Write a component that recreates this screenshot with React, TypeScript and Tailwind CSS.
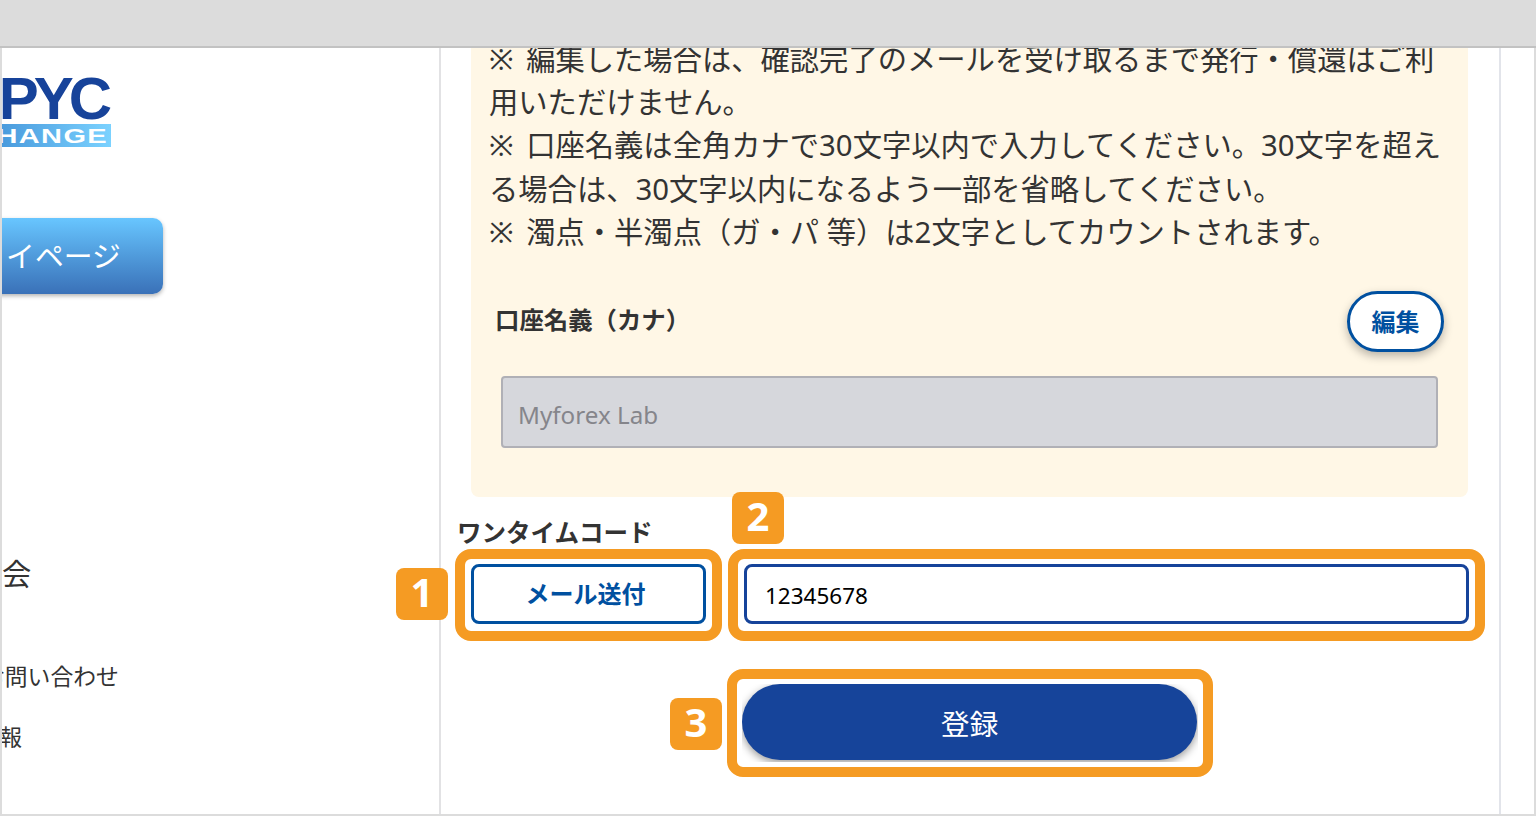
import React from 'react';

const NOTICE_LINES = [
  { mark: true, text: '編集した場合は、確認完了のメールを受け取るまで発行・償還はご利' },
  { mark: false, text: '用いただけません。' },
  { mark: true, text: '口座名義は全角カナで30文字以内で入力してください。30文字を超え' },
  { mark: false, text: 'る場合は、30文字以内になるよう一部を省略してください。' },
  { mark: true, text: '濁点・半濁点（ガ・パ 等）は2文字としてカウントされます。' },
];

const Badge: React.FC<{ n: number; className: string }> = ({ n, className }) => (
  <div className={`absolute flex h-[52px] w-[52px] items-center justify-center rounded-lg bg-[#f59b23] pb-1 text-[40px] leading-none font-bold text-white ${className}`}>
    {n}
  </div>
);

const Sidebar: React.FC = () => (
  <aside className="w-[439px] shrink-0 overflow-hidden border-r-2 border-[#e2e2e4]">
    <div className="mt-[26px] h-[73px] w-[109px] overflow-hidden">
      <div className="flex h-[50px] justify-end text-[60px] leading-[50px] font-bold tracking-[-5px] text-[#17439a] [font-family:'Liberation_Sans',sans-serif]">
        <span className="pr-[4px]">PYC</span>
      </div>
      <div className="flex h-[23px] items-center justify-end overflow-hidden bg-gradient-to-r from-[#4a9bdd] to-[#7bd2ff] pr-[3px] text-[21px] leading-none font-bold text-white [font-family:'Liberation_Sans',sans-serif]">
        <span className="origin-right scale-x-[1.38] whitespace-nowrap tracking-[1px]">EXCHANGE</span>
      </div>
    </div>
    <div className="mt-[71px] -ml-[70px] flex h-[76px] w-[231px] items-center justify-center rounded-[10px] bg-gradient-to-b from-[#68c6ff] to-[#3a71b8] text-[28.8px] text-white shadow-[0_2px_4px_rgba(0,0,0,0.3)]">
      <span className="mr-[3px]">マ</span>イページ
    </div>
    <div className="mt-[258px] h-[44px] text-[29.3px] leading-[44px] text-[#333]">会</div>
    <div className="mt-[64px] -ml-[20px] h-[34px] text-[22.8px] leading-[34px] whitespace-nowrap text-[#333]">お問い合わせ</div>
    <div className="mt-[25px] -ml-[24px] h-[34px] text-[22px] leading-[34px] whitespace-nowrap text-[#333]">情報</div>
  </aside>
);

const App: React.FC = () => {
  return (
    <div className="flex h-screen w-full flex-col overflow-hidden bg-white [font-family:'Noto_Sans','Noto_Sans_CJK_JP',sans-serif]">
      <div className="relative z-10 h-[48px] shrink-0 border-b-2 border-[#c2c2c2] bg-[#dcdcdc]" />
      <div className="flex min-h-0 flex-1 border-x-2 border-b-2 border-[#dcdcdc]">
        <Sidebar />
        <main className="w-[1060px] shrink-0 border-r-2 border-[#e2e4ea]">
          <section className="-mt-[10px] ml-[30px] w-[997px] rounded-b-lg bg-[#fff7e6] pb-[49px]">
            <div className="pl-[18px] text-[29.3px] leading-[43.2px] whitespace-nowrap text-[#333]">
              {NOTICE_LINES.map((line) => (
                <div key={line.text}>
                  {line.mark && <span className="[word-spacing:5px]">※ </span>}
                  {line.text}
                </div>
              ))}
            </div>
            <div className="mt-[37px] flex items-center justify-between px-6">
              <span className="-mt-[2px] text-[24.4px] font-bold text-[#333]">口座名義（カナ）</span>
              <button className="h-[61px] w-[97px] rounded-full border-[3px] border-[#0050a0] bg-white text-[24px] font-bold text-[#0050a0] shadow-[0_4px_10px_rgba(0,0,0,0.28)]">
                編集
              </button>
            </div>
            <div className="mt-6 px-[30px]">
              <input
                readOnly
                value="Myforex Lab"
                className="h-[72px] w-full rounded border-2 border-[#b0b0b6] bg-[#d6d7dc] px-[15px] pt-1 text-[24.2px] text-[#85858b]"
              />
            </div>
          </section>

          <div className="mt-[18px] ml-4 h-9 text-[24.5px] leading-9 font-bold text-[#333]">ワンタイムコード</div>

          <div className="mt-[13px] ml-[30px] flex gap-[38px]">
            <div className="relative">
              <div className="absolute -top-[15px] -right-4 -bottom-[17px] -left-4 rounded-2xl border-[10px] border-[#f59b23]" />
              <Badge n={1} className="top-[4px] -left-[75px]" />
              <button className="block h-[60px] w-[235px] rounded-lg border-[3px] border-[#0050a0] bg-white pr-[6px] text-[24px] font-bold text-[#0050a0]">
                メール送付
              </button>
            </div>
            <div className="relative">
              <div className="absolute -top-[15px] -right-4 -bottom-[17px] -left-4 rounded-2xl border-[10px] border-[#f59b23]" />
              <Badge n={2} className="-top-[72px] -left-[12px]" />
              <input
                readOnly
                value="12345678"
                className="block h-[60px] w-[725px] rounded-lg border-[3px] border-[#16439a] bg-white px-[18px] pt-[2px] text-[22.5px] text-black"
              />
            </div>
          </div>

          <div className="relative mt-[60px] ml-[301px] w-[456px]">
            <div className="absolute -top-[15px] -right-[15px] -bottom-[15px] -left-[15px] rounded-2xl border-[10px] border-[#f59b23]" />
            <Badge n={3} className="top-[14px] -left-[72px]" />
            <div className="h-[78px] overflow-hidden">
              <button className="h-[76px] w-[455px] rounded-full bg-[#16449a] pt-1 text-[28.8px] text-white shadow-[0_3px_8px_rgba(0,0,0,0.4)]">
                登録
              </button>
            </div>
          </div>
        </main>
      </div>
    </div>
  );
};

export default App;
